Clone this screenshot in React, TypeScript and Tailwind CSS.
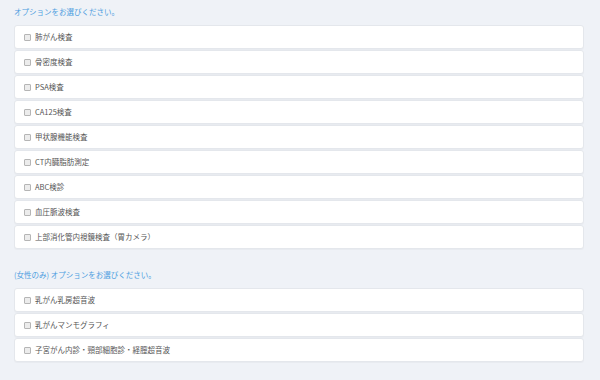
import React from "react";

const group1 = [
  "肺がん検査",
  "骨密度検査",
  "PSA検査",
  "CA125検査",
  "甲状腺機能検査",
  "CT内臓脂肪測定",
  "ABC検診",
  "血圧脈波検査",
  "上部消化管内視鏡検査（胃カメラ）",
];

const group2 = [
  "乳がん乳房超音波",
  "乳がんマンモグラフィ",
  "子宮がん内診・頸部細胞診・経膣超音波",
];

function Item({ label }: { label: string }) {
  return (
    <label className="flex h-[24px] items-center rounded-[3px] border border-[#e4e7ec] bg-white pl-[9px] shadow-[0_1px_1px_rgba(0,0,0,0.03)]">
      <span className="box-border h-[7px] w-[7px] rounded-[1px] border border-[#b5b5b5] bg-[#ececec]" />
      <span className="ml-[4px] text-[7.5px] leading-none text-[#555]">{label}</span>
    </label>
  );
}

function Section({ title, items }: { title: string; items: string[] }) {
  return (
    <div>
      <div className="flex h-[12px] items-center text-[7.5px] leading-none text-[#4d9de0]">{title}</div>
      <div className="mt-[7px] flex flex-col gap-[1px]">
        {items.map((it) => (
          <Item key={it} label={it} />
        ))}
      </div>
    </div>
  );
}

export default function App() {
  return (
    <div
      className="min-h-[380px] w-[600px] bg-[#eff2f7] pl-[14px] pr-[16px] pt-[6px]"
      style={{ fontFamily: '"Noto Sans CJK JP", "Noto Sans", sans-serif' }}
    >
      <div className="flex flex-col gap-[20px]">
        <Section title="オプションをお選びください。" items={group1} />
        <Section title="(女性のみ) オプションをお選びください。" items={group2} />
      </div>
    </div>
  );
}
